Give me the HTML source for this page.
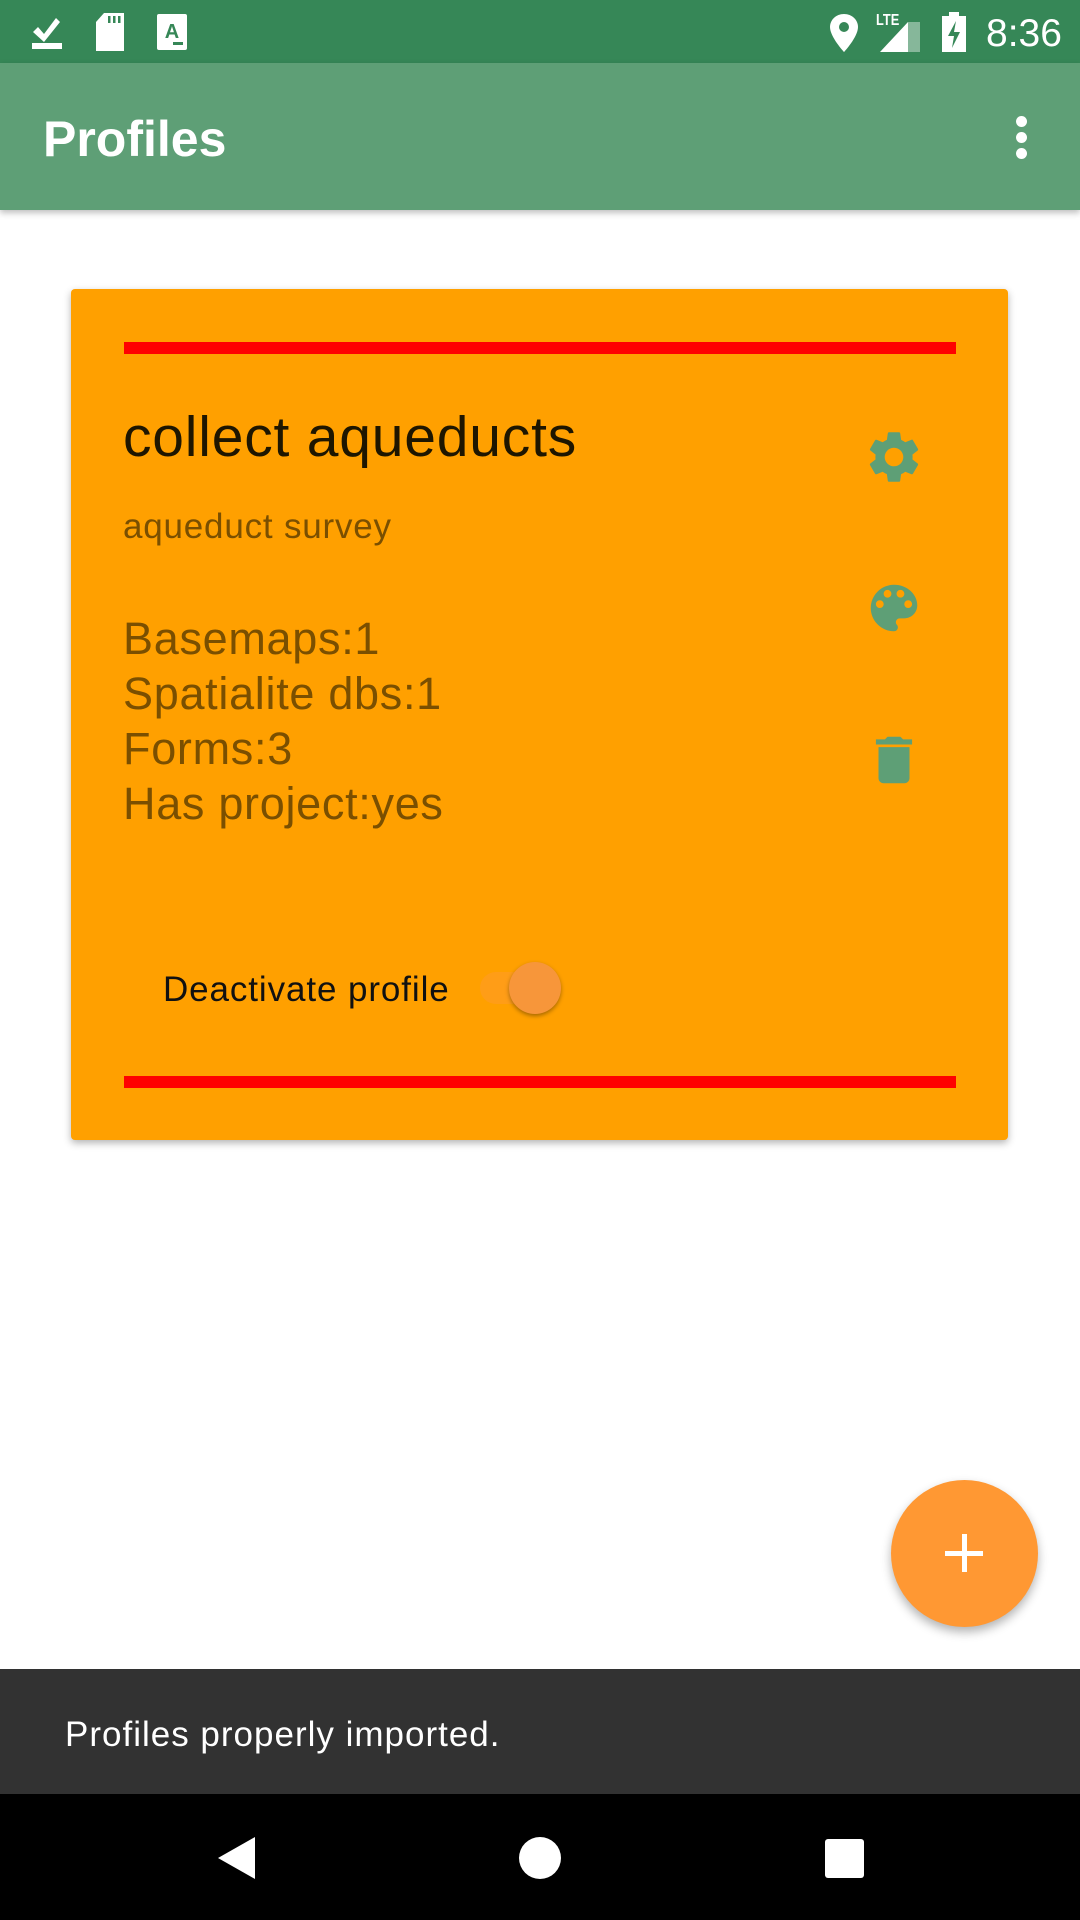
<!DOCTYPE html>
<html><head><meta charset="utf-8"><style>
*{margin:0;padding:0;box-sizing:border-box}
body{width:1080px;height:1920px;position:relative;background:#fff;font-family:"Liberation Sans",Roboto,sans-serif;overflow:hidden}
.abs{position:absolute}
.t{white-space:nowrap;line-height:1}
</style></head><body>
<div class="abs" style="left:0;top:0;width:1080px;height:63px;background:#368757"></div>
<svg class="abs" style="left:30px;top:12px" width="40" height="40" viewBox="0 0 40 40"><path d="M3 20l5-5 6 7 12-16 4 4-16 20z" fill="#fff"/><rect x="2" y="31" width="30" height="6" fill="#fff"/></svg>
<svg class="abs" style="left:94px;top:12px" width="34" height="40" viewBox="0 0 34 40"><path d="M10 1h20v38H2V10z" fill="#fff"/><rect x="14" y="4" width="2.5" height="7" fill="#368757"/><rect x="19" y="4" width="2.5" height="7" fill="#368757"/><rect x="24" y="4" width="2.5" height="7" fill="#368757"/></svg>
<svg class="abs" style="left:157px;top:14px" width="30" height="36" viewBox="0 0 30 36"><rect x="0" y="0" width="30" height="36" rx="2" fill="#fff"/><text x="15" y="24" font-size="20" font-weight="bold" text-anchor="middle" fill="#368757" font-family="Liberation Sans">A</text><rect x="16" y="28" width="10" height="3" fill="#368757"/></svg>
<svg class="abs" style="left:828px;top:13px" width="32" height="40" viewBox="0 0 32 40"><path d="M16 1C8 1 2 7 2 14c0 10 14 25 14 25s14-15 14-25C30 7 24 1 16 1z" fill="#fff"/><circle cx="16" cy="14" r="5" fill="#368757"/></svg>
<div class="abs t" style="left:876px;top:13px;font-size:16px;font-weight:bold;color:#fff;transform:scaleX(.8);transform-origin:left">LTE</div>
<svg class="abs" style="left:880px;top:22px" width="42" height="30" viewBox="0 0 42 30"><path d="M0 30L28 0v30z" fill="#fff"/><path d="M28 0L40 -2V30H28z" fill="#fff" opacity=".4"/></svg>
<svg class="abs" style="left:942px;top:12px" width="24" height="40" viewBox="0 0 24 40"><rect x="7" y="0" width="10" height="4" fill="#fff"/><rect x="0" y="4" width="24" height="36" fill="#fff"/><path d="M14 9l-8 15h6l-2 12 8-16h-6z" fill="#368757"/></svg>
<div class="abs t" style="left:986px;top:14px;font-size:39px;color:#fff">8:36</div>
<div class="abs" style="left:0;top:63px;width:1080px;height:147px;background:#5e9f76;box-shadow:0 3px 6px rgba(0,0,0,.25)"></div>
<div class="abs t" style="left:43px;top:114px;font-size:50px;color:#fff;font-weight:bold">Profiles</div>
<div class="abs" style="left:1016px;top:116px;width:11px;height:11px;border-radius:50%;background:#fff"></div>
<div class="abs" style="left:1016px;top:132px;width:11px;height:11px;border-radius:50%;background:#fff"></div>
<div class="abs" style="left:1016px;top:148px;width:11px;height:11px;border-radius:50%;background:#fff"></div>
<div class="abs" style="left:71px;top:289px;width:937px;height:851px;background:#ffa000;border-radius:4px;box-shadow:0 3px 8px rgba(0,0,0,.3)"></div>
<div class="abs" style="left:124px;top:342px;width:832px;height:12px;background:#ff0000"></div>
<div class="abs" style="left:124px;top:1076px;width:832px;height:12px;background:#ff0000"></div>
<div class="abs t" style="left:123px;top:409px;font-size:57px;color:#1e1600;letter-spacing:0.8px">collect aqueducts</div>
<div class="abs t" style="left:123px;top:509px;font-size:35px;color:#7a4f00;letter-spacing:0.8px">aqueduct survey</div>
<div class="abs" style="left:123px;top:611px;font-size:45px;line-height:55px;color:#7a4f00;white-space:nowrap;letter-spacing:0.7px">Basemaps:1<br>Spatialite dbs:1<br>Forms:3<br>Has project:yes</div>
<svg class="abs" style="left:863px;top:426px" width="62" height="62" viewBox="0 0 24 24"><path fill="#5e9f76" d="M19.140 12.94c.04-.3.06-.61.06-.94 0-.32-.02-.64-.07-.94l2.030-1.58a.49.49 0 0 0 .12-.61l-1.920-3.320a.488.488 0 0 0-.59-.22l-2.390.96c-.5-.38-1.030-.7-1.620-.94l-.36-2.540a.484.484 0 0 0-.48-.41h-3.840c-.24 0-.43.17-.47.41l-.36 2.540c-.59.24-1.130.57-1.620.94l-2.390-.96c-.22-.08-.47 0-.59.22L2.740 8.870c-.12.21-.08.47.12.61l2.030 1.580c-.05.3-.09.63-.09.94s.02.64.07.94l-2.030 1.580a.49.49 0 0 0-.12.61l1.920 3.320c.12.22.37.29.59.22l2.390-.96c.5.38 1.030.7 1.620.94l.36 2.540c.05.24.24.41.48.41h3.840c.24 0 .44-.17.47-.41l.36-2.540c.59-.24 1.130-.56 1.620-.94l2.390.96c.22.08.47 0 .59-.22l1.920-3.320c.12-.22.07-.47-.12-.61l-2.010-1.580zM12 15.6c-1.980 0-3.6-1.620-3.6-3.6s1.620-3.6 3.6-3.6 3.6 1.620 3.6 3.6-1.620 3.6-3.6 3.6z"/></svg>
<svg class="abs" style="left:863px;top:577px" width="62" height="62" viewBox="0 0 24 24"><path fill="#5e9f76" d="M12 3a9 9 0 0 0 0 18c.83 0 1.5-.67 1.5-1.5 0-.39-.15-.74-.39-1.010-.23-.26-.38-.61-.38-.99 0-.83.67-1.5 1.5-1.5H16c2.760 0 5-2.240 5-5 0-4.420-4.030-8-9-8zm-5.5 9c-.83 0-1.5-.67-1.5-1.5S5.67 9 6.5 9 8 9.67 8 10.5 7.33 12 6.5 12zm3-4C8.67 8 8 7.33 8 6.5S8.67 5 9.5 5s1.5.67 1.5 1.5S10.33 8 9.5 8zm5 0c-.83 0-1.5-.67-1.5-1.5S13.67 5 14.5 5s1.5.67 1.5 1.5S15.33 8 14.5 8zm3 4c-.83 0-1.5-.67-1.5-1.5S16.67 9 17.5 9s1.5.67 1.5 1.5-.67 1.5-1.5 1.5z"/></svg>
<svg class="abs" style="left:863px;top:729px" width="62" height="62" viewBox="0 0 24 24"><path fill="#5e9f76" d="M6 19c0 1.1.9 2 2 2h8c1.1 0 2-.9 2-2V7H6v12zM19 4h-3.5l-1-1h-5l-1 1H5v2h14V4z"/></svg>
<div class="abs t" style="left:163px;top:972px;font-size:35px;color:#111;letter-spacing:0.9px">Deactivate profile</div>
<div class="abs" style="left:480px;top:972px;width:60px;height:32px;border-radius:16px;background:#ff9a2e;opacity:.5"></div>
<div class="abs" style="left:509px;top:962px;width:52px;height:52px;border-radius:50%;background:#f7963a;box-shadow:0 2px 4px rgba(0,0,0,.35)"></div>
<div class="abs" style="left:891px;top:1480px;width:147px;height:147px;border-radius:50%;background:#ff9833;box-shadow:0 5px 10px rgba(0,0,0,.3)"></div>
<div class="abs" style="left:945px;top:1551px;width:38px;height:5px;background:#fff"></div>
<div class="abs" style="left:962px;top:1534px;width:5px;height:38px;background:#fff"></div>
<div class="abs" style="left:0;top:1669px;width:1080px;height:125px;background:#323232"></div>
<div class="abs t" style="left:65px;top:1717px;font-size:35px;color:#fff;letter-spacing:1px">Profiles properly imported.</div>
<div class="abs" style="left:0;top:1794px;width:1080px;height:126px;background:#000"></div>
<svg class="abs" style="left:215px;top:1835px" width="44" height="46" viewBox="0 0 44 46"><path d="M40 2v42L3 23z" fill="#fff"/></svg>
<div class="abs" style="left:519px;top:1837px;width:42px;height:42px;border-radius:50%;background:#fff"></div>
<div class="abs" style="left:825px;top:1839px;width:39px;height:39px;background:#fff;border-radius:3px"></div>
</body></html>
